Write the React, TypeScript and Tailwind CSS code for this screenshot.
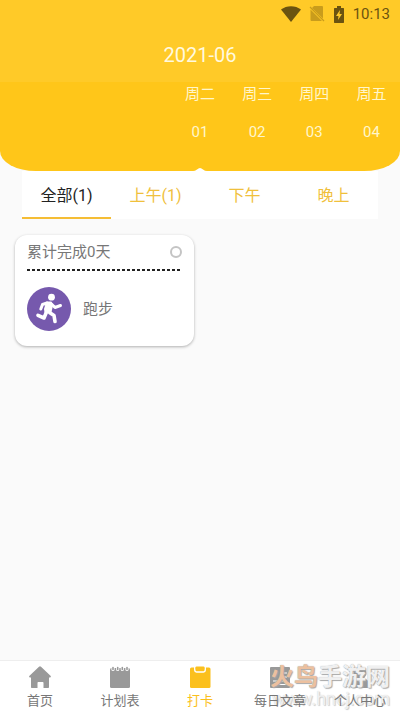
import { useState } from "react";

const days = [
  { week: "", date: "" },
  { week: "", date: "" },
  { week: "", date: "" },
  { week: "周二", date: "01" },
  { week: "周三", date: "02" },
  { week: "周四", date: "03" },
  { week: "周五", date: "04" },
];

const tabs = ["全部(1)", "上午(1)", "下午", "晚上"];

const navItems = [
  { label: "首页", icon: HomeIcon },
  { label: "计划表", icon: PlanIcon },
  { label: "打卡", icon: ClipboardIcon },
  { label: "每日文章", icon: ArticleIcon },
  { label: "个人中心", icon: UserIcon },
];

function HomeIcon() {
  return (
    <svg viewBox="0 0 24 24" className="w-6 h-6" fill="currentColor">
      <path d="M11 1.8a1.5 1.5 0 0 1 2 0l9.5 9c.7.7.4 1.7-.5 1.7h-1V22c0 .6-.4 1-1 1h-4.500v-5c0-.6-.4-1-1-1h-4c-.6 0-1 .4-1 1v5H4c-.6 0-1-.4-1-1v-9.500H2c-.9 0-1.200-1-.5-1.700z" />
    </svg>
  );
}

function PlanIcon() {
  return (
    <svg viewBox="0 0 24 24" className="w-6 h-6">
      <rect x="2" y="3" width="20" height="20" rx="1.5" fill="currentColor" />
      <g stroke="#fff" strokeWidth="3.2" strokeLinecap="round">
        <path d="M5 2.500v2M9.700 2.500v2M14.300 2.500v2M19 2.500v2" />
      </g>
      <g stroke="currentColor" strokeWidth="1.6" strokeLinecap="round">
        <path d="M5 2.500v2M9.700 2.500v2M14.300 2.500v2M19 2.500v2" />
      </g>
    </svg>
  );
}

function ClipboardIcon() {
  return (
    <svg viewBox="0 0 24 24" className="w-6 h-6">
      <rect x="2" y="2.5" width="20.5" height="20.5" rx="1.5" fill="currentColor" />
      <path d="M6.800 1.500v3.700c0 1 .7 1.700 1.700 1.700h7c1 0 1.700-.7 1.700-1.700V1.500" fill="none" stroke="#fff" strokeWidth="1.5" />
      <rect x="7.5" y="1.5" width="9" height="3.5" rx="1" fill="currentColor" />
    </svg>
  );
}

function ArticleIcon() {
  return (
    <svg viewBox="0 0 24 24" className="w-6 h-6">
      <rect x="2" y="2" width="20" height="21" rx="1" fill="currentColor" />
      <path d="M13 8h6M13 12h6M5 16h14M5 19.500h14" stroke="#fff" strokeWidth="1.2" />
    </svg>
  );
}

function UserIcon() {
  return (
    <svg viewBox="0 0 24 24" className="w-6 h-6" fill="currentColor">
      <circle cx="12" cy="8" r="6.5" />
      <path d="M3 23v-5c0-2.500 3-4 5.500-4l3.500 3.500 3.500-3.500c2.500 0 5.500 1.500 5.500 4v5z" />
    </svg>
  );
}

function StatusBar() {
  return (
    <div className="h-7 px-[10px] flex items-center justify-end text-[#6b5310]">
      <svg viewBox="0 0 20 16" className="w-5 h-4 mr-2" fill="currentColor">
        <path d="M10 16 0 3.500C5.500-1 14.500-1 20 3.500z" />
      </svg>
      <svg viewBox="0 0 16 16" className="w-4 h-4 mr-2 text-[#c99c1c]">
        <path d="M5 0h8a1 1 0 0 1 1 1v11.500L3 2zM1.500 3.500 13 15H2.500a1 1 0 0 1-1-1z" fill="currentColor" />
        <path d="m1 1 14 14" stroke="currentColor" strokeWidth="1.2" />
      </svg>
      <svg viewBox="0 0 12 17" className="w-3 h-[17px] mr-2">
        <path d="M4 0h4v2h2.500l.5.500v14l-.5.500h-9L1 16.500v-14l.5-.5H4z" fill="currentColor" />
        <path d="M7 4 3 10h2.500L5 14l4-6H6.500z" fill="#ffca28" />
      </svg>
      <span className="text-[15px] leading-5">10:13</span>
    </div>
  );
}

function RunnerIcon() {
  return (
    <svg viewBox="0 0 44 44" className="w-11 h-11 shrink-0">
      <circle cx="22" cy="22" r="22" fill="#7659ad" />
      <circle cx="24.5" cy="10.2" r="3.4" fill="#fff" />
      <path d="M20 15.500h4l1 3-1.500 6.500h-5l-.5-3z" fill="#fff" stroke="#fff" strokeWidth="2" strokeLinejoin="round" />
      <g fill="none" stroke="#fff" strokeLinecap="round" strokeLinejoin="round">
        <path d="m20 16-4.500 1.500-1.700 4.500M24.500 17l3.500 3.500 5.500-2" strokeWidth="3" />
        <path d="m19.500 25-2.500 6-6-2.700M22.500 25.500l4.500 3 1 6" strokeWidth="3.6" />
      </g>
    </svg>
  );
}

export default function App() {
  const [activeTab, setActiveTab] = useState(0);
  const [done, setDone] = useState(false);

  return (
    <div className="min-h-screen flex flex-col bg-[#fafafa] font-[Roboto,'Noto_Sans_CJK_SC',sans-serif]">
      {/* Header */}
      <header className="relative bg-[#ffc619] rounded-b-[36px_20px] overflow-hidden">
        <div className="bg-[#ffca28] pb-3">
          <StatusBar />
          <h1 className="pt-3 text-center text-xl leading-[30px] text-[#fff9df]">2021-06</h1>
        </div>
        <div className="grid grid-cols-7 h-[89px] text-center text-[15px] text-[#fff6cc]">
          {days.map((day, i) => (
            <div key={i} className="flex flex-col gap-4">
              <span className="leading-6">{day.week}</span>
              <span className="leading-5">{day.date}</span>
            </div>
          ))}
        </div>
        <svg viewBox="0 0 14 3" className="absolute bottom-0 left-1/2 -translate-x-1/2 w-[14px] h-[3px]">
          <path d="M0 3Q2 3 4 1.500Q7-1.500 10 1.500Q12 3 14 3z" fill="#fff" />
        </svg>
      </header>

      <main className="flex-1">
        {/* Tabs */}
        <div className="mx-[22px] bg-white grid grid-cols-4">
          {tabs.map((tab, i) => (
            <button
              key={tab}
              onClick={() => setActiveTab(i)}
              className={
                i === activeTab
                  ? "h-12 pt-1 border-b-2 border-[#f5bd35] text-base text-[#222222]"
                  : "h-12 pt-1 border-b-2 border-transparent text-base text-[#f0c03c]"
              }
            >
              {tab}
            </button>
          ))}
        </div>

        {/* Task cards */}
        <div className="px-[15px] py-4 grid grid-cols-2 gap-3">
          <div className="h-[111px] px-3 bg-white rounded-xl shadow-[0_1px_3px_rgba(0,0,0,0.3)]">
            <label className="h-[34px] flex items-center justify-between text-[15px] text-[#777777]">
              累计完成0天
              <input
                type="checkbox"
                checked={done}
                onChange={() => setDone(!done)}
                className="appearance-none w-3 h-3 rounded-full border-2 border-[#c4c4c4] checked:bg-[#ffc619]"
              />
            </label>
            <svg className="w-full h-[2px]">
              <line x1="0" y1="1" x2="100%" y2="1" stroke="#222" strokeWidth="2" strokeDasharray="3 2" />
            </svg>
            <div className="pt-4 flex items-center gap-3 text-[15px] text-[#777777]">
              <RunnerIcon />
              跑步
            </div>
          </div>
        </div>
      </main>

      {/* Bottom nav */}
      <nav className="relative h-[51px] bg-white border-t border-[#eeeeee] grid grid-cols-5">
        {navItems.map(({ label, icon: Icon }) => (
          <a
            key={label}
            href="#"
            className={
              label === "打卡"
                ? "pt-1 flex flex-col items-center gap-1 text-[#fbc01d]"
                : "pt-1 flex flex-col items-center gap-1 text-[#999999]"
            }
          >
            <Icon />
            <span
              className={
                label === "打卡"
                  ? "text-[13px] leading-4"
                  : "relative z-10 text-[13px] leading-4 text-[#777777]"
              }
            >
              {label}
            </span>
          </a>
        ))}
        {/* Watermark */}
        <div className="absolute right-[10px] top-0 pointer-events-none flex flex-col items-end">
          <span className="text-2xl leading-8 font-bold text-white/85 [text-shadow:0_0_1px_#999,1px_1px_1px_#aaa]">
            <span className="text-[#f8c6a0]/90">火鸟</span>手游网
          </span>
          <span className="text-lg leading-3 text-white/70 [text-shadow:0_0_1px_#ccc,1px_1px_1px_#ccc]">
            www.hncj.com
          </span>
        </div>
      </nav>
    </div>
  );
}
